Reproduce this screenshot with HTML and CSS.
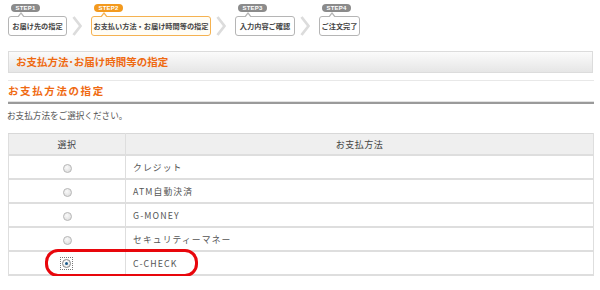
FILE: index.html
```html
<!DOCTYPE html>
<html lang="ja">
<head>
<meta charset="utf-8">
<title>お支払方法の指定</title>
<link rel="stylesheet" href="styles.css">
</head>
<body>
<div class="page">
  <div class="steps">
    <div class="step">
      <span class="pill">STEP1</span>
      <div class="box w1">お届け先の指定</div>
    </div>
    <div class="chev"><svg width="10" height="20" viewBox="0 0 10 20"><polyline points="1.5,1 8.5,10 1.5,19" fill="none" stroke="#dcdcdc" stroke-width="2.8"/></svg></div>
    <div class="step current">
      <span class="pill">STEP2</span>
      <div class="box w2">お支払い方法・お届け時間等の指定</div>
    </div>
    <div class="chev"><svg width="10" height="20" viewBox="0 0 10 20"><polyline points="1.5,1 8.5,10 1.5,19" fill="none" stroke="#dcdcdc" stroke-width="2.8"/></svg></div>
    <div class="step">
      <span class="pill">STEP3</span>
      <div class="box w3">入力内容ご確認</div>
    </div>
    <div class="chev"><svg width="10" height="20" viewBox="0 0 10 20"><polyline points="1.5,1 8.5,10 1.5,19" fill="none" stroke="#dcdcdc" stroke-width="2.8"/></svg></div>
    <div class="step">
      <span class="pill">STEP4</span>
      <div class="box w4">ご注文完了</div>
    </div>
  </div>

  <div class="bar">お支払方法･お届け時間等の指定</div>

  <div class="title"><div class="title-in">お支払方法の指定</div></div>

  <p class="lead">お支払方法をご選択ください。</p>

  <div class="table-wrap">
    <table class="pay">
      <thead>
        <tr><th class="c1">選択</th><th>お支払方法</th></tr>
      </thead>
      <tbody>
        <tr><td class="c1"><span class="radio"></span></td><td>クレジット</td></tr>
        <tr><td class="c1"><span class="radio"></span></td><td>ATM自動決済</td></tr>
        <tr><td class="c1"><span class="radio"></span></td><td>G-MONEY</td></tr>
        <tr><td class="c1"><span class="radio"></span></td><td>セキュリティーマネー</td></tr>
        <tr><td class="c1"><span class="focus"><span class="radio checked"></span></span></td><td>C-CHECK</td></tr>
      </tbody>
    </table>
    <div class="mark"></div>
  </div>
</div>
</body>
</html>
```

FILE: styles.css
```css
html, body {
  margin: 0;
  padding: 0;
  background: #fff;
}
body {
  font-family: "Noto Sans CJK JP", "Noto Sans", sans-serif;
  color: #555;
}
.page {
  width: 586px;
  padding: 4px 0 0 8px;
}

/* steps */
.steps {
  display: flex;
  align-items: flex-end;
}
.step {
  display: flex;
  flex-direction: column;
  align-items: flex-start;
}
.pill {
  margin-left: 3px;
  width: 29px;
  height: 8px;
  border-radius: 4px;
  background: #8b8b8b;
  color: #fff;
  font: bold 6px/8px "Liberation Sans", Arial, sans-serif;
  text-align: center;
  letter-spacing: 0.2px;
}
.current .pill {
  background: #f39a1e;
}
.box {
  position: relative;
  box-sizing: border-box;
  margin-top: 4px;
  height: 20px;
  border: 1px solid #b5b5b5;
  border-radius: 3px;
  background: #fff;
  display: flex;
  align-items: center;
  justify-content: center;
  font-size: 7.2px;
  font-weight: bold;
  color: #444;
  white-space: nowrap;
}
.box::before {
  content: "";
  position: absolute;
  top: -5px;
  left: 8px;
  border-style: solid;
  border-width: 0 4px 5px 4px;
  border-color: transparent transparent #b5b5b5 transparent;
}
.box::after {
  content: "";
  position: absolute;
  top: -3px;
  left: 9px;
  border-style: solid;
  border-width: 0 3px 4px 3px;
  border-color: transparent transparent #fff transparent;
}
.current .box {
  border-color: #f5b251;
  background: #fffdf6;
}
.current .box::before {
  border-bottom-color: #f5b251;
}
.current .box::after {
  border-bottom-color: #fffdf6;
}
.w1 { width: 59px; }
.w2 { width: 120px; }
.w3 { width: 60px; }
.w4 { width: 41px; }
.chev {
  width: 24px;
  height: 20px;
  display: flex;
  padding-left: 5px;
  box-sizing: border-box;
}

/* header bar */
.bar {
  box-sizing: border-box;
  margin-top: 15px;
  width: 585px;
  height: 22px;
  border: 1px solid #dcdcdc;
  background: linear-gradient(#fbfbfb, #e6e6e6);
  padding-left: 7px;
  font-size: 10.5px;
  line-height: 20px;
  font-weight: bold;
  color: #ef6a12;
}

/* section title */
.title {
  margin-top: 7px;
  border-top: 1px solid #e8e8e8;
  border-bottom: 2px solid #9a9a9a;
}
.title-in {
  height: 20px;
  border-bottom: 1px solid #e2e2e2;
  font-size: 10.5px;
  line-height: 20px;
  font-weight: bold;
  letter-spacing: 1.6px;
  color: #ef6a12;
}

.lead {
  margin: 5px 0 0 -1px;
  font-size: 8.6px;
  line-height: 13px;
  color: #555;
}

/* table */
.table-wrap {
  position: relative;
  margin-top: 11px;
}
.pay {
  width: 586px;
  border-collapse: collapse;
  font-size: 8.8px;
  color: #555;
}
.pay th, .pay td {
  border: 1px solid #dedede;
  border-width: 2px 1px 0 1px;
  height: 22px;
  padding: 0;
}
.pay thead th {
  border-top: 1px solid #d8d8d8;
  background: #efefef;
  font-weight: normal;
  color: #444;
  font-size: 9px;
  letter-spacing: 0.5px;
  height: 20px;
}
.pay tbody tr:last-child td {
  border-bottom: 2px solid #dedede;
}
.pay .c1 {
  width: 116px;
  text-align: center;
}
.pay td:not(.c1) {
  padding-left: 7px;
  letter-spacing: 1.1px;
}
.radio {
  display: inline-block;
  vertical-align: middle;
  width: 7px;
  height: 7px;
  border-radius: 50%;
  border: 1px solid #b8b8b8;
  background: radial-gradient(circle at 40% 35%, #fafafa, #d8d8d8);
  margin-left: 1px;
}
.radio.checked {
  position: relative;
  background: radial-gradient(circle at 40% 35%, #fff, #e0e0e0);
  border-color: #8a8a8a;
}
.radio.checked::after {
  content: "";
  position: absolute;
  left: 2px;
  top: 2px;
  width: 3px;
  height: 3px;
  border-radius: 50%;
  background: #1b5a8a;
}
.focus {
  display: inline-block;
  vertical-align: middle;
  padding: 1px;
  border: 1px dotted #777;
  line-height: 0;
  margin-left: -1px;
}
.focus .radio {
  margin-left: 0;
}

/* annotation */
.mark {
  position: absolute;
  left: 37px;
  top: 116px;
  width: 147px;
  height: 22px;
  border: 3px solid #e8060c;
  border-radius: 13px;
}
```
